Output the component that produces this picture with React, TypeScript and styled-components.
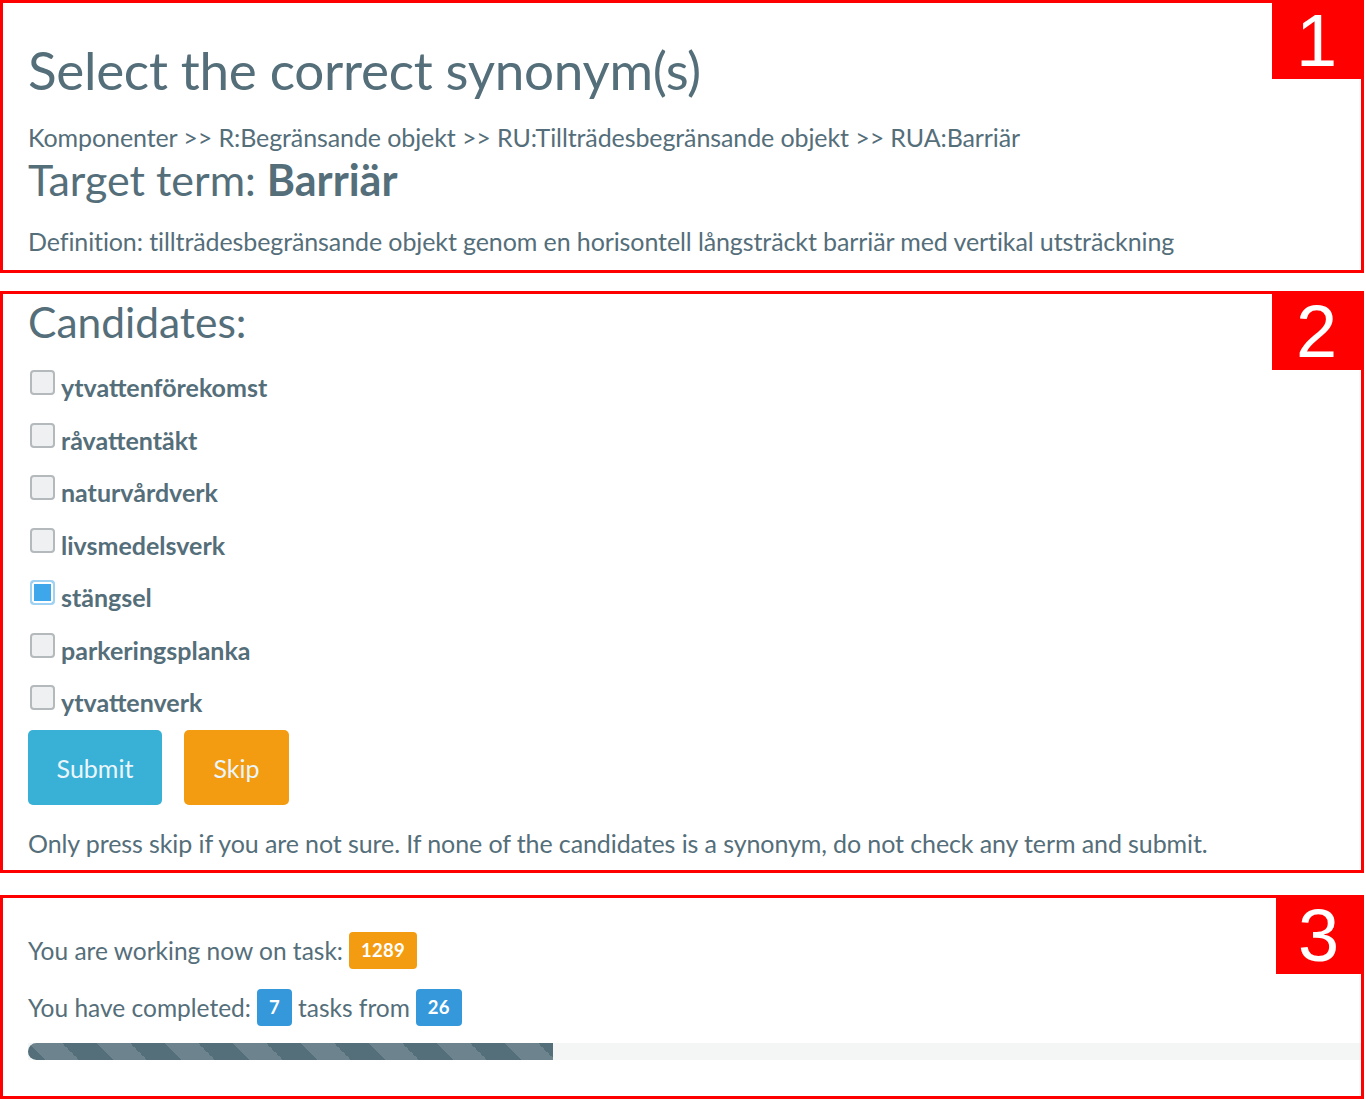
import styled, { createGlobalStyle } from 'styled-components';

const GlobalStyle = createGlobalStyle`
  html, body {
    margin: 0;
    padding: 0;
    background: #fff;
  }

  body {
    font-family: Lato, 'Liberation Sans', sans-serif;
    color: #546e7a;
  }
`;

const Page = styled.div`
  width: 1366px;
  height: 1100px;
  display: flex;
  flex-direction: column;
  overflow: hidden;
`;

type PanelProps = {
  $height: number;
  $padTop: number;
  $offset: number;
};

const Panel = styled.section<PanelProps>`
  position: relative;
  box-sizing: border-box;
  width: 1364px;
  height: ${({ $height }) => $height}px;
  margin-top: ${({ $offset }) => $offset}px;
  border: 3px solid #ff0000;
  padding: ${({ $padTop }) => $padTop}px 0 0 25px;
  display: flex;
  flex-direction: column;
  flex-shrink: 0;
`;

const Marker = styled.div<{ $width: number }>`
  position: absolute;
  top: 0;
  right: 0;
  width: ${({ $width }) => $width}px;
  height: 76px;
  background: #ff0000;
  color: #fff;
  font-family: 'Liberation Sans', Arial, sans-serif;
  font-size: 74px;
  line-height: 76px;
  text-align: center;
`;

const Title = styled.h1`
  margin: 0;
  font-weight: 400;
  font-size: 53px;
  line-height: 60px;
  letter-spacing: -0.3px;
`;

const Text = styled.p<{ $gap: number }>`
  margin: ${({ $gap }) => $gap}px 0 0;
  font-size: 25px;
  line-height: 30px;
  letter-spacing: -0.1px;
`;

const Target = styled.h2`
  margin: 5px 0 0;
  font-weight: 400;
  font-size: 43px;
  line-height: 46px;

  b {
    font-weight: 700;
  }
`;

const Heading = styled.h3`
  margin: 0;
  font-weight: 400;
  font-size: 42.5px;
  line-height: 48px;
`;

const List = styled.ul`
  list-style: none;
  margin: 15px 0 0;
  padding: 0;
`;

const Row = styled.li`
  height: 52.5px;
  display: flex;
  align-items: center;
  gap: 6px;
  padding-left: 2px;
`;

const Box = styled.span<{ $checked: boolean }>`
  box-sizing: border-box;
  width: 25px;
  height: 25px;
  margin-top: -9px;
  border-radius: 4px;
  border: 2px solid ${({ $checked }) => ($checked ? '#9fd1f2' : '#b4b9bc')};
  background: ${({ $checked }) => ($checked ? '#3ea6ea' : '#eef0f2')};
  box-shadow: ${({ $checked }) => ($checked ? 'inset 0 0 0 2px #ffffff' : 'none')};
`;

const Term = styled.span`
  font-weight: 700;
  font-size: 25px;
`;

const Actions = styled.div`
  display: flex;
  gap: 22px;
  margin-top: 1.5px;
`;

const Button = styled.button<{ $tone: string; $width: number }>`
  width: ${({ $width }) => $width}px;
  height: 75px;
  border: none;
  border-radius: 5px;
  background: ${({ $tone }) => $tone};
  color: #eaf6fb;
  font-family: Lato, 'Liberation Sans', sans-serif;
  font-size: 25px;
  padding: 0;
`;

const Line = styled.p<{ $gap: number }>`
  margin: ${({ $gap }) => $gap}px 0 0;
  height: 40px;
  display: flex;
  align-items: center;
  gap: 6px;
  font-size: 24.5px;
`;

const Badge = styled.span<{ $tone: string; $width: number }>`
  box-sizing: border-box;
  flex-shrink: 0;
  width: ${({ $width }) => $width}px;
  height: 37px;
  display: inline-flex;
  align-items: center;
  justify-content: center;
  border-radius: 4px;
  background: ${({ $tone }) => $tone};
  color: #fff;
  font-weight: 700;
  font-size: 18.5px;
  letter-spacing: 0.3px;
`;

const Track = styled.div`
  margin-top: 16px;
  height: 17px;
  background: #f4f6f6;
  display: flex;
`;

const Fill = styled.div`
  height: 100%;
  border-radius: 9px 0 0 9px;
  background-color: #546e7a;
  background-image: linear-gradient(
    45deg,
    rgba(255, 255, 255, 0.15) 25%,
    transparent 25%,
    transparent 50%,
    rgba(255, 255, 255, 0.15) 50%,
    rgba(255, 255, 255, 0.15) 75%,
    transparent 75%,
    transparent
  );
  background-size: 68px 68px;
`;

const candidates = [
  { term: 'ytvattenförekomst', checked: false },
  { term: 'råvattentäkt', checked: false },
  { term: 'naturvårdverk', checked: false },
  { term: 'livsmedelsverk', checked: false },
  { term: 'stängsel', checked: true },
  { term: 'parkeringsplanka', checked: false },
  { term: 'ytvattenverk', checked: false },
];

const BLUE = '#3498db';
const ORANGE = '#f39c12';

export default function App(): JSX.Element {
  const done = 7;
  const total = 26;
  // the bar in the shot is wider than done/total would give
  const fillWidth = 525;

  return (
    <>
      <GlobalStyle />
      <Page>
        <Panel $height={273} $padTop={37} $offset={0}>
          <Marker $width={89}>1</Marker>
          <Title>Select the correct synonym(s)</Title>
          <Text $gap={22}>
            Komponenter &gt;&gt; R:Begränsande objekt &gt;&gt; RU:Tillträdesbegränsande objekt &gt;&gt; RUA:Barriär
          </Text>
          <Target>
            Target term: <b>Barriär</b>
          </Target>
          <Text $gap={23}>
            Definition: tillträdesbegränsande objekt genom en horisontell långsträckt barriär med vertikal utsträckning
          </Text>
        </Panel>

        <Panel $height={582} $padTop={4} $offset={18}>
          <Marker $width={89}>2</Marker>
          <Heading>Candidates:</Heading>
          <List>
            {candidates.map((c) => (
              <Row key={c.term}>
                <Box $checked={c.checked} />
                <Term>{c.term}</Term>
              </Row>
            ))}
          </List>
          <Actions>
            <Button $tone="#39b0d6" $width={134}>Submit</Button>
            <Button $tone={ORANGE} $width={105}>Skip</Button>
          </Actions>
          <Text $gap={23}>
            Only press skip if you are not sure. If none of the candidates is a synonym, do not check any term and submit.
          </Text>
        </Panel>

        <Panel $height={204} $padTop={32} $offset={22}>
          <Marker $width={85}>3</Marker>
          <Line $gap={0}>
            You are working now on task: <Badge $tone={ORANGE} $width={68}>1289</Badge>
          </Line>
          <Line $gap={17}>
            You have completed: <Badge $tone={BLUE} $width={35}>{done}</Badge> tasks from{' '}
            <Badge $tone={BLUE} $width={46}>{total}</Badge>
          </Line>
          <Track>
            <Fill style={{ width: fillWidth }} />
          </Track>
        </Panel>
      </Page>
    </>
  );
}
